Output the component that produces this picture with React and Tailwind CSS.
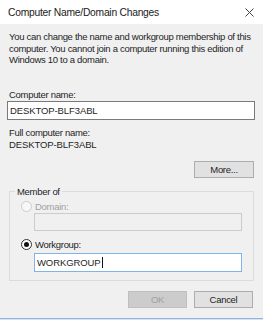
export default function App() {
  const font = { fontFamily: '"Liberation Sans", Arial, sans-serif' };
  return (
    <div className="relative w-[263px] h-[320px] bg-[#f0f0f0] overflow-hidden text-[#1e1e1e]" style={font}>
      {/* Title bar */}
      <div className="h-[24px] bg-white flex items-center justify-between pl-[8px] pr-[9px]">
        <span className="text-[10.3px] leading-[12px] tracking-[-0.25px] text-[#222] pt-[1px]">Computer Name/Domain Changes</span>
        <svg width="9" height="9" viewBox="0 0 9 9">
          <path d="M0.5 0.5 L8.5 8.5 M8.5 0.5 L0.5 8.5" stroke="#444" strokeWidth="1" fill="none" />
        </svg>
      </div>

      <div className="px-[9px] text-[9.5px] leading-[11.5px] tracking-[-0.3px]">
        <p className="mt-[7px] w-[246px]">
          You can change the name and workgroup membership of this computer. You cannot join a computer running this edition of Windows 10 to a domain.
        </p>

        <div className="mt-[23.5px]">Computer name:</div>
        <div className="mt-[0.5px] -ml-[2px] w-[248px] h-[19px] bg-white border border-[#7a7a7a] flex items-center pl-[2px] tracking-[-0.1px]">
          DESKTOP-BLF3ABL
        </div>

        <div className="mt-[7px]">Full computer name:</div>
        <div className="leading-[11px] tracking-[-0.1px]">DESKTOP-BLF3ABL</div>

        <div className="flex justify-end mt-[11.5px]">
          <button className="w-[60px] h-[17px] bg-[#e1e1e1] border border-[#adadad] text-[9.5px] leading-[15px] text-[#1e1e1e]">More...</button>
        </div>

        {/* Group box */}
        <div className="relative mt-[13px] w-[245px] h-[90px] border border-[#dcdcdc]">
          <span className="absolute left-[5px] -top-[6px] px-[2px] bg-[#f0f0f0] leading-[11px]">Member of</span>
          <div className="pl-[11px] pt-[9px]">
            <div className="flex items-center h-[11px]">
              <span className="w-[11px] h-[11px] rounded-full border border-[#cccccc] bg-[#f7f7f7] shrink-0"></span>
              <span className="ml-[3px] text-[#a0a0a0]">Domain:</span>
            </div>
            <div className="ml-[13px] mt-[1px] w-[208px] h-[18px] bg-[#f0f0f0] border border-[#cccccc]"></div>
            <div className="flex items-center h-[11px] mt-[8px]">
              <span className="w-[11px] h-[11px] rounded-full border border-[#333] bg-white shrink-0 flex items-center justify-center">
                <span className="w-[5px] h-[5px] rounded-full bg-[#111]"></span>
              </span>
              <span className="ml-[3px]">Workgroup:</span>
            </div>
            <div className="ml-[13px] mt-[3px] w-[208px] h-[19px] bg-white border border-[#7eb4ea] flex items-center pl-[2px] tracking-[-0.1px]">
              WORKGROUP<span className="inline-block w-[1px] h-[11px] bg-[#111] ml-[1px]"></span>
            </div>
          </div>
        </div>

        <div className="flex justify-end gap-[7px] mt-[10px] pr-[1px]">
          <button className="w-[59px] h-[17px] bg-[#cccccc] border border-[#bfbfbf] text-[9.5px] leading-[15px] text-[#a0a0a0]">OK</button>
          <button className="w-[59px] h-[17px] bg-[#e1e1e1] border border-[#adadad] text-[9.5px] leading-[15px] text-[#1e1e1e]">Cancel</button>
        </div>
      </div>

      <div className="absolute left-0 right-0 top-[318px] h-[1px] bg-[#8fb4e0]"></div>
      <div className="absolute left-0 right-0 top-[319px] h-[1px] bg-[#d6e2f0]"></div>
    </div>
  );
}
